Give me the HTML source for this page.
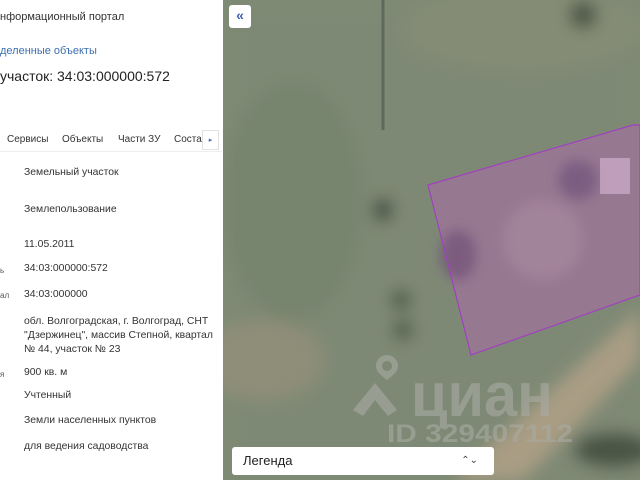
<!DOCTYPE html>
<html><head><meta charset="utf-8"><style>
*{margin:0;padding:0;box-sizing:border-box}
body{width:640px;height:480px;overflow:hidden;position:relative;background:#fff;font-family:"Liberation Sans","DejaVu Sans",sans-serif;color:#222}
.l{position:absolute;white-space:nowrap}
.s{font-size:10px}
.v{font-size:10.4px;left:24px;color:#333}
.k{font-size:8px;color:#555;left:0}
#map{position:absolute;left:223px;top:0;width:417px;height:480px;background:#7f8a74;overflow:hidden}
</style></head><body>
<div class="l" style="left:0;top:11px;font-size:11px;color:#333">нформационный портал</div>
<div class="l" style="left:0;top:45px;font-size:11px;color:#3d6fb0">деленные объекты</div>
<div class="l" style="left:0;top:68px;font-size:14px;color:#222">участок: 34:03:000000:572</div>
<div class="l s" style="left:7px;top:134px;color:#333">Сервисы</div>
<div class="l s" style="left:62px;top:134px;color:#333">Объекты</div>
<div class="l s" style="left:118px;top:134px;color:#333">Части ЗУ</div>
<div class="l s" style="left:174px;top:134px;color:#333">Состав</div>
<div style="position:absolute;left:202px;top:130px;width:17px;height:20px;background:#fff;border:1px solid #e2e2e2;font-size:7px;color:#3d6fb0;text-align:center;line-height:20px">▸</div>
<div style="position:absolute;left:0;top:151px;width:222px;height:1px;background:#eee"></div>
<div class="l v" style="top:167px">Земельный участок</div>
<div class="l v" style="top:204px">Землепользование</div>
<div class="l v" style="top:239px">11.05.2011</div>
<div class="l k" style="top:266px">ь</div><div class="l v" style="top:263px">34:03:000000:572</div>
<div class="l k" style="top:291px">ал</div><div class="l v" style="top:289px">34:03:000000</div>
<div class="l v" style="top:315px;line-height:14px">обл. Волгоградская, г. Волгоград, СНТ<br>"Дзержинец", массив Степной, квартал<br>№ 44, участок № 23</div>
<div class="l k" style="top:370px">я</div><div class="l v" style="top:367px">900 кв. м</div>
<div class="l v" style="top:390px">Учтенный</div>
<div class="l v" style="top:415px">Земли населенных пунктов</div>
<div class="l v" style="top:441px">для ведения садоводства</div>
<div id="map">
<svg width="417" height="480" style="position:absolute;left:0;top:0">
<defs><filter id="b"><feGaussianBlur stdDeviation="8"/></filter><filter id="c"><feGaussianBlur stdDeviation="6"/></filter></defs>
<g filter="url(#b)">
<rect x="0" y="0" width="417" height="480" fill="#7e8974"/>
<ellipse cx="70" cy="200" rx="70" ry="120" fill="#77846e"/>
<ellipse cx="40" cy="360" rx="60" ry="40" fill="#8f8e78"/>
<path d="M230 480 L417 310 L417 360 L300 480Z" fill="#a99d84"/>
<ellipse cx="300" cy="30" rx="120" ry="40" fill="#858c76"/>
<ellipse cx="160" cy="210" rx="10" ry="12" fill="#3f4a3c"/>
<ellipse cx="178" cy="300" rx="10" ry="10" fill="#4a5444"/>
<ellipse cx="180" cy="330" rx="10" ry="10" fill="#4a5444"/>
<ellipse cx="360" cy="15" rx="14" ry="14" fill="#4a5444"/>
<ellipse cx="390" cy="450" rx="40" ry="18" fill="#4a5444"/>
</g>
<line x1="160" y1="0" x2="160" y2="130" stroke="#5f695b" stroke-width="3"/>
<polygon points="205,185 410,125 417,125 417,295 248,355" fill="#9a7795" fill-opacity="0.9"/>
<g filter="url(#c)">
<ellipse cx="235" cy="255" rx="18" ry="25" fill="#6f5078" opacity=".7"/>
<ellipse cx="355" cy="180" rx="20" ry="20" fill="#6a4c78" opacity=".6"/>
<ellipse cx="320" cy="240" rx="40" ry="40" fill="#a88aa0" opacity=".6"/>
</g>
<rect x="377" y="158" width="30" height="36" fill="#c8a8c4" opacity=".8"/>
<polygon points="205,185 410,125 417,125 417,295 248,355" fill="none" stroke="#a040c0" stroke-width="1.2"/>
<g fill="#a9aba3" opacity=".6">
<path d="M164 355 a11 11 0 0 1 11 11 c0 6 -6 10 -11 14 c-5 -4 -11 -8 -11 -14 a11 11 0 0 1 11 -11Z M164 361 a5 5 0 1 0 0.1 0Z" fill-rule="evenodd"/>
<path d="M130 410 L152 383 L174 410 L165 416 L152 400 L140 416Z"/>
<text x="188" y="416" font-size="62" font-family="Liberation Sans,sans-serif" font-weight="bold" textLength="142" lengthAdjust="spacingAndGlyphs">циан</text>
<text x="164" y="442" font-size="25" font-family="Liberation Sans,sans-serif" font-weight="bold" textLength="186" lengthAdjust="spacingAndGlyphs">ID 329407112</text>
</g>
</svg>
<div style="position:absolute;left:6px;top:5px;width:22px;height:23px;background:#fff;border-radius:3px;color:#3d5fb0;font-size:14px;font-weight:bold;text-align:center;line-height:21px">«</div>
<div style="position:absolute;left:9px;top:447px;width:262px;height:28px;background:#fff;border-radius:3px;font-size:13px;color:#222;line-height:28px;padding-left:11px">Легенда<span style="position:absolute;right:16px;top:0;font-size:10px;color:#444">⌃⌄</span></div>
</div>
</body></html>
